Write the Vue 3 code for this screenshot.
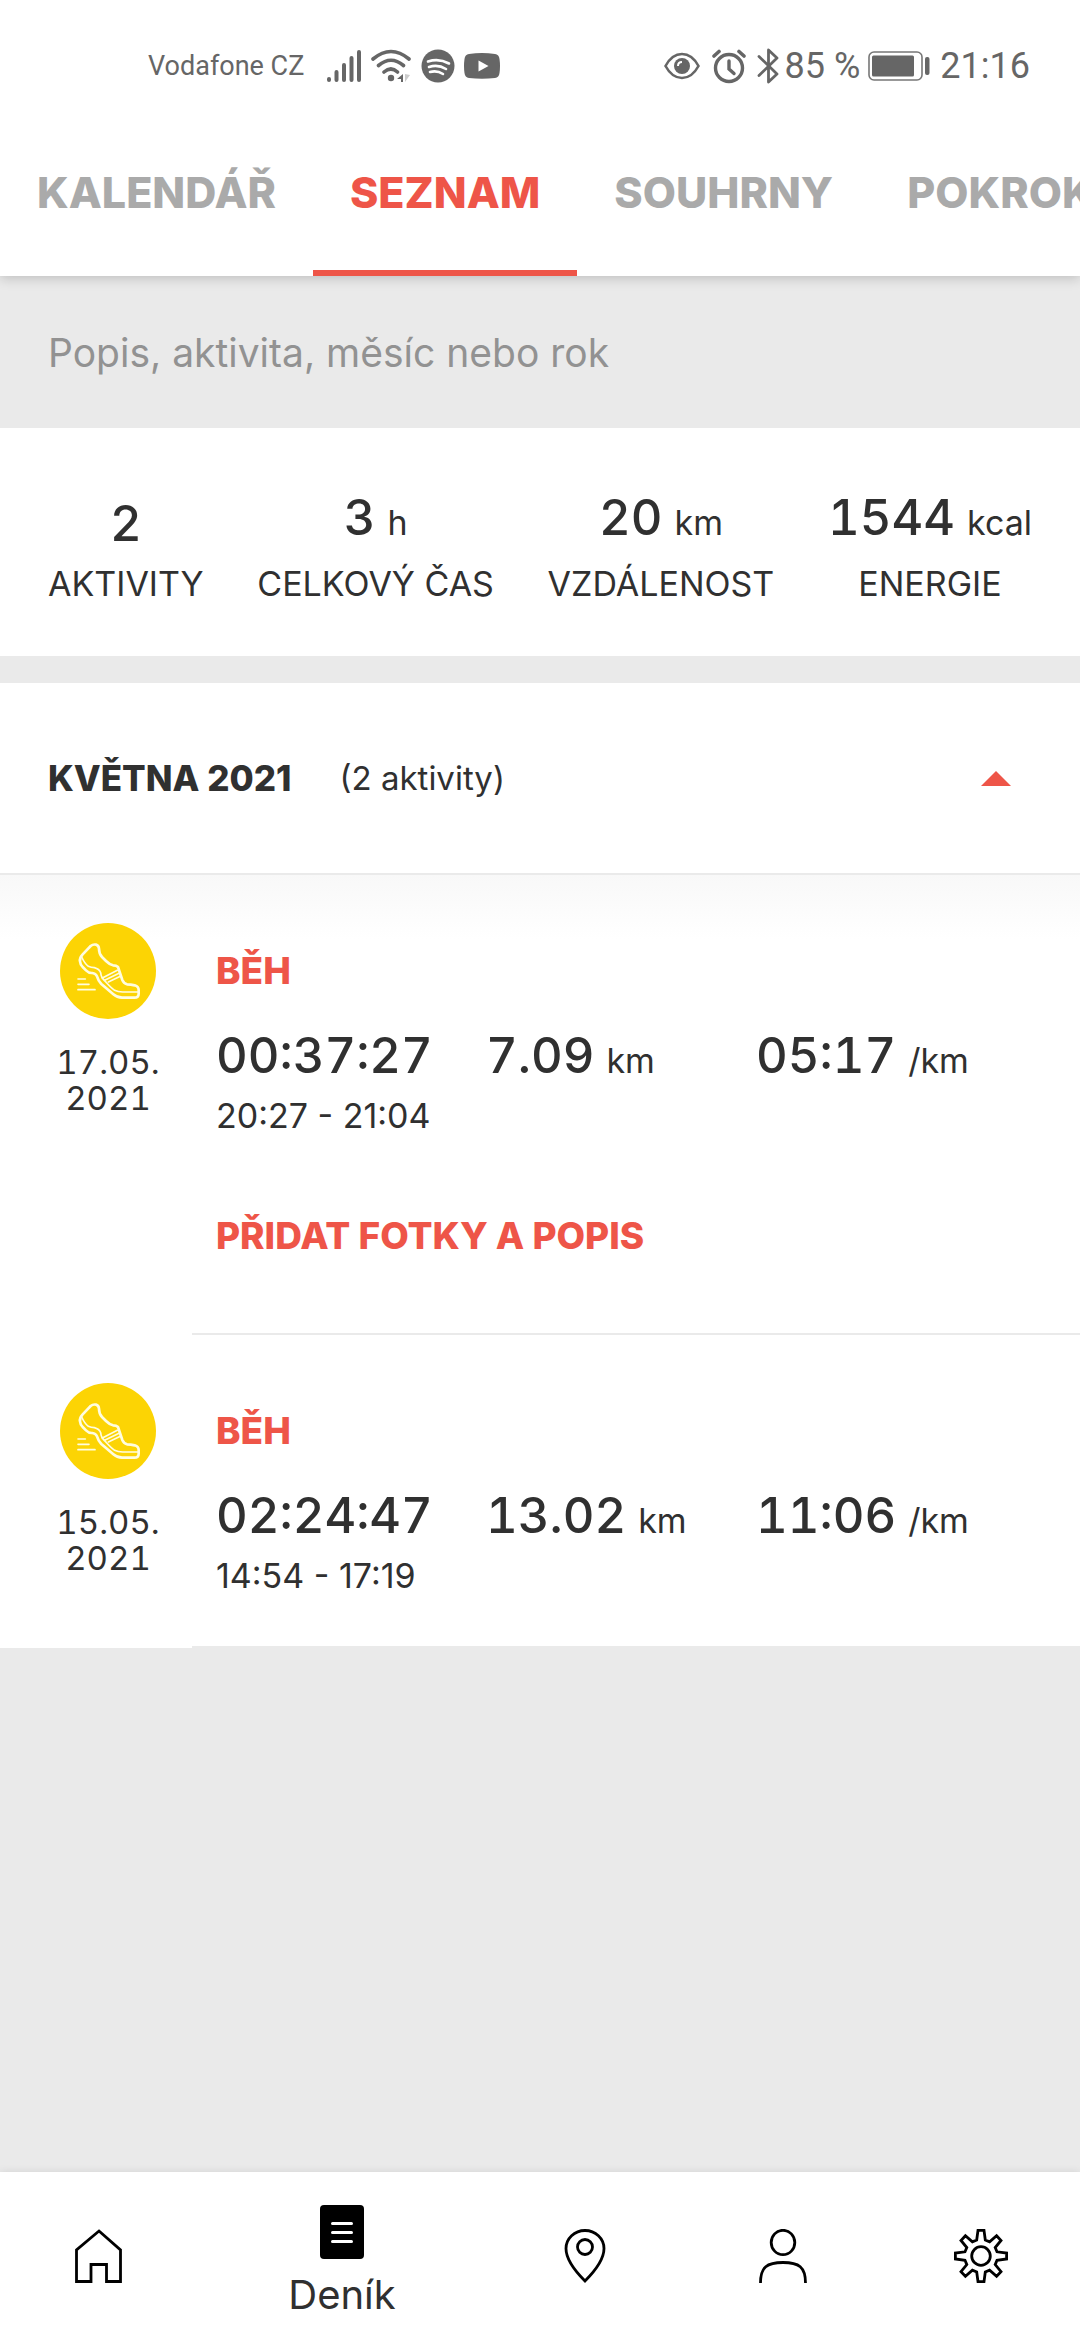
<script setup>
import { ref } from 'vue'

const tabs = ['KALENDÁŘ', 'SEZNAM', 'SOUHRNY', 'POKROK']
const activeTab = ref('SEZNAM')
const query = ref('')
const open = ref(true)

const stats = [
  { value: '2', unit: '', label: 'AKTIVITY' },
  { value: '3', unit: 'h', label: 'CELKOVÝ ČAS' },
  { value: '20', unit: 'km', label: 'VZDÁLENOST' },
  { value: '1544', unit: 'kcal', label: 'ENERGIE' }
]

const entries = [
  { day: '17.05.', year: '2021', time: '00:37:27', range: '20:27 - 21:04', distance: '7.09', pace: '05:17', editable: true },
  { day: '15.05.', year: '2021', time: '02:24:47', range: '14:54 - 17:19', distance: '13.02', pace: '11:06', editable: false }
]
</script>

<template>
  <div class="app">
    <header class="top">
      <div class="status">
        <div class="status-left">
          <span class="carrier">Vodafone CZ</span>
          <svg class="signal" width="36" height="34" viewBox="0 0 36 34" stroke="#666" stroke-width="4" stroke-linecap="round">
            <path d="M3 30v1M10.500 23v8M18 16v15M25.500 9v22M33 3v28" />
          </svg>
          <svg class="wifi" width="40" height="34" viewBox="0 0 40 34" fill="none" stroke="#666" stroke-width="3.600" stroke-linecap="round">
            <path d="M2 10Q20-5 38 10M7.500 16.500Q20 6 32.500 16.500M13 23Q20 17 26.500 23" />
            <circle cx="20" cy="29" r="3.200" fill="#666" stroke="none" />
            <path d="M32 25v8h-2v-3h-4z" fill="#666" stroke="none" />
            <path d="M34 25v8l5-7z" fill="#ccc" stroke="none" />
          </svg>
          <svg class="music" width="34" height="34" viewBox="0 0 34 34">
            <circle cx="17" cy="17" r="16.500" fill="#666" />
            <path d="M7 12.500q11-3.500 21 2M8 18q9-3 17 2M9 23q7-2 13 2" fill="none" stroke="#fff" stroke-width="2.600" stroke-linecap="round" />
          </svg>
          <svg width="36" height="26" viewBox="0 0 36 26">
            <path d="M5 1Q18-1 31 1Q35 1.500 35.500 6Q36.500 13 35.500 20Q35 24.500 31 25Q18 26.500 5 25Q1 24.500 .5 20Q-.5 13 .5 6Q1 1.500 5 1Z" fill="#666" />
            <path d="M14.500 7.500v11l10-5.500z" fill="#fff" />
          </svg>
        </div>
        <div class="status-right">
          <svg class="eye" width="36" height="28" viewBox="0 0 36 28" fill="none" stroke="#666" stroke-width="2.600">
            <path d="M1.500 14Q8 2 18 2T34.500 14Q28 26 18 26T1.500 14Z" />
            <circle cx="18" cy="14" r="8" fill="#666" stroke="none" />
            <path d="M14 14q0-4 4-4" stroke="#fff" stroke-width="2" />
          </svg>
          <svg class="alarm" width="34" height="36" viewBox="0 0 34 36" fill="none" stroke="#666" stroke-linecap="round">
            <circle cx="17" cy="20" r="13.500" stroke-width="3.400" />
            <path d="M17 13v8l5 4.500" stroke-width="3.400" />
            <path d="M2 8l5-4.500M32 8l-5-4.500" stroke-width="3.600" />
          </svg>
          <svg width="22" height="36" viewBox="0 0 22 36" fill="none" stroke="#666" stroke-width="2.800" stroke-linecap="round" stroke-linejoin="round">
            <path d="M2 8.500L20 26 11.500 34V2L20 10 2 27.500" />
          </svg>
          <span class="percent">85 %</span>
          <svg class="battery" width="62" height="30" viewBox="0 0 62 30">
            <rect x="1" y="1" width="53" height="28" rx="5" fill="none" stroke="#777" stroke-width="1.600" />
            <rect x="4" y="4.500" width="42" height="21" rx="1.500" fill="#666" />
            <rect x="57" y="6" width="4.500" height="18" rx="2" fill="#666" />
          </svg>
          <span>21:16</span>
        </div>
      </div>
      <nav class="tabs" aria-label="Deník">
        <button
          v-for="tab in tabs"
          :key="tab"
          type="button"
          class="tab"
          :class="{ 'tab-active': tab === activeTab }"
          @click="activeTab = tab"
        >{{ tab }}</button>
      </nav>
    </header>

    <main class="content">
      <input v-model="query" class="search" type="text" aria-label="Popis, aktivita, měsíc nebo rok" placeholder="Popis, aktivita, měsíc nebo rok" />

      <section class="stats">
        <div v-for="stat in stats" :key="stat.label" class="stat">
          <div class="value" :class="{ 'value-plain': !stat.unit }">
            {{ stat.value }}<span v-if="stat.unit" class="unit">{{ stat.unit }}</span>
          </div>
          <div class="label">{{ stat.label }}</div>
        </div>
      </section>

      <section class="month">
        <button type="button" class="month-head" :aria-expanded="open" @click="open = !open">
          <span class="month-name">KVĚTNA 2021</span>
          <span class="month-count">(2 aktivity)</span>
          <svg class="arrow" width="30" height="15" viewBox="0 0 30 15"><path d="M15 0l15 15H0z" fill="#ee5548" /></svg>
        </button>

        <div v-if="open" class="entries">
          <article v-for="entry in entries" :key="entry.day" class="entry">
            <div class="when">
              <svg class="badge" width="96" height="96" viewBox="0 0 288 288" fill="none" stroke="#fffde0" stroke-linecap="round" stroke-linejoin="round">
                <circle cx="144" cy="144" r="144" fill="#fcd404" stroke="none" />
                <path d="M92 69L68 94Q58 104 60 115Q61 126 68 132L78 142Q87 151 97 150Q107 151 111 160Q115 174 124 183L160 214Q171 224 186 224H223Q236 224 236 212V201Q236 191 224 187Q212 184 201 184Q191 181 187 171L174 132Q169 127 159 127Q148 124 138 114L126 102Q117 92 117 77Q116 67 108 65Q99 63 92 69Z" stroke-width="8" />
                <path d="M65 102Q74 122 85 130Q93 134 103 134Q118 138 122 149Q123 164 135 174Q151 193 164 202Q173 207 188 207H235" stroke-width="5" />
                <path d="M127 165L172 142M134 172L177 151M145 177L181 160" stroke-width="5" />
                <path d="M54 168H76M54 184H87M54 200H105" stroke-width="5" />
              </svg>
              <time class="date">{{ entry.day }}<br />{{ entry.year }}</time>
            </div>
            <div class="body">
              <h2 class="kind">BĚH</h2>
              <div class="metrics">
                <div class="metric">{{ entry.time }}</div>
                <div class="metric">{{ entry.distance }}<span class="unit">km</span></div>
                <div class="metric">{{ entry.pace }}<span class="unit">/km</span></div>
              </div>
              <div class="range">{{ entry.range }}</div>
              <button v-if="entry.editable" type="button" class="action">PŘIDAT FOTKY A POPIS</button>
            </div>
          </article>
        </div>
      </section>
    </main>

    <nav class="bottom" aria-label="Hlavní nabídka">
      <a href="#" class="item" aria-label="Domů">
        <svg width="54" height="54" viewBox="0 0 54 54" fill="none" stroke="#000" stroke-width="2.800">
          <path d="M27 2L48.500 21V52.500H34.500V35.500H19V52.500H4.500V21Z" />
        </svg>
      </a>
      <a href="#" class="item item-active" aria-current="page">
        <svg width="54" height="54" viewBox="0 0 54 54">
          <rect x="5" y="0" width="44" height="54" rx="4" fill="#000" />
          <path d="M17.500 18.500h19M17.500 27.500h19M17.500 36.500h19" stroke="#fff" stroke-width="3" stroke-linecap="round" />
        </svg>
        <span class="item-label">Deník</span>
      </a>
      <a href="#" class="item" aria-label="Místa">
        <svg width="54" height="54" viewBox="0 0 54 54" fill="none" stroke="#000" stroke-width="2.800">
          <path d="M27 52Q8 33 8 19.500A19 18 0 0 1 46 19.500Q46 33 27 52Z" />
          <circle cx="27" cy="18" r="7.500" />
        </svg>
      </a>
      <a href="#" class="item" aria-label="Profil">
        <svg width="54" height="54" viewBox="0 0 54 54" fill="none" stroke="#000" stroke-width="2.800">
          <ellipse cx="27" cy="13.500" rx="11.800" ry="12.200" />
          <path d="M4.500 54C4.500 38 11 33.500 27 33.500S49.500 38 49.500 54" />
        </svg>
      </a>
      <a href="#" class="item" aria-label="Nastavení">
        <svg width="54" height="54" viewBox="0 0 54 54" fill="none" stroke="#000" stroke-width="2.800">
          <path d="M24 1.400H30L31.300 11L35.600 12.800L42.600 6.800L47 11.500L41.200 18.500L43 22.800L52.600 24V30L43 31.300L41.200 35.600L47 42.600L42.600 47.200L35.600 41.200L31.300 43L30 52.600H24L22.700 43L18.400 41.200L11.400 47.200L7 42.600L12.800 35.600L11 31.300L1.400 30V24L11 22.800L12.800 18.500L7 11.500L11.400 6.800L18.400 12.800L22.700 11Z" />
          <circle cx="27" cy="27" r="9.300" />
        </svg>
      </a>
    </nav>
  </div>
</template>

<style>
body {
  margin: 0;
}
</style>

<style scoped>
.app {
  display: flex;
  flex-direction: column;
  min-height: 100vh;
  overflow: hidden;
  background: #eaeaea;
  color: #303030;
  font-family: Inter, "Liberation Sans", sans-serif;
  font-size: 34px;
  line-height: 36px;
}

svg {
  display: block;
  flex: none;
}

button {
  border: 0;
  background: none;
  font-family: inherit;
  white-space: nowrap;
  cursor: pointer;
}

.top {
  position: relative;
  background: #fff;
  box-shadow: 0 2px 12px rgba(0, 0, 0, 0.2);
}

.status {
  display: flex;
  justify-content: space-between;
  align-items: center;
  height: 132px;
  padding: 0 50px 0 148px;
  color: #666;
  font-family: Roboto, sans-serif;
  font-size: 36px;
}

.status-left,
.status-right {
  display: flex;
  align-items: center;
}

.carrier {
  margin-right: 22px;
  font-size: 27px;
}

.wifi {
  margin: 0 10px 0 9px;
}

.music {
  margin-right: 9px;
}

.eye {
  margin-right: 12px;
}

.alarm {
  margin-right: 11px;
}

.percent {
  margin-left: 6px;
}

.battery {
  margin: 0 10px 0 8px;
}

.tabs {
  display: flex;
  overflow: hidden;
}

.tab {
  flex: none;
  height: 144px;
  padding: 36px 37px 54px;
  border-bottom: 6px solid transparent;
  color: #aaa;
  font-size: 43px;
  font-weight: 800;
  line-height: 48px;
}

.tab-active {
  border-bottom-color: #ee5548;
  color: #ee5548;
}

.content {
  flex: 1;
}

.search {
  display: block;
  box-sizing: border-box;
  width: 100%;
  height: 152px;
  padding: 0 48px;
  border: 0;
  outline: 0;
  background: none;
  color: #303030;
  font-family: inherit;
  font-size: 39px;
}

.search::placeholder {
  color: #929292;
  opacity: 1;
}

.stats {
  display: flex;
  justify-content: space-between;
  align-items: flex-end;
  padding: 60px 48px 54px;
  background: #fff;
  text-align: center;
}

.value,
.metric {
  font-size: 49px;
  font-weight: 500;
  line-height: 60px;
}

.value {
  margin-bottom: 18px;
}

.value-plain {
  margin-bottom: 12px;
}

.value,
.metric,
.date {
  font-variant-numeric: tabular-nums;
}

.date {
  margin-top: 25px;
  font-size: 33px;
}

.unit {
  margin-left: 12px;
  font-size: 34px;
  font-weight: 400;
  line-height: 36px;
}

.month {
  margin-top: 27px;
  background: #fff;
}

.month-head {
  display: flex;
  align-items: center;
  width: 100%;
  height: 192px;
  padding: 0 69px 0 48px;
  border-bottom: 2px solid #eaeaea;
  color: #303030;
  font-size: 33px;
}

.month-name {
  margin-right: 48px;
  font-size: 35px;
  font-weight: 800;
}

.arrow {
  margin-left: auto;
}

.entries {
  background: linear-gradient(#f8f8f8, #fff 64px);
}

.entry {
  display: flex;
}

.when {
  display: flex;
  flex-direction: column;
  align-items: center;
  box-sizing: border-box;
  width: 192px;
  padding: 48px 0 0 24px;
  text-align: center;
}

.body {
  flex: 1;
  padding: 72px 54px 52px 24px;
  border-bottom: 2px solid #eaeaea;
}

.kind,
.action {
  margin: 0;
  padding: 0;
  color: #ee5548;
  font-size: 37px;
  font-weight: 800;
  line-height: 48px;
}

.metrics {
  display: grid;
  grid-template-columns: repeat(3, 1fr);
  margin: 31px 0 12px;
}

.action {
  display: block;
  margin: 78px 0 21px;
}

.bottom {
  display: flex;
  height: 168px;
  background: #fff;
  box-shadow: 0 0 8px rgba(0, 0, 0, 0.1);
}

.item {
  display: flex;
  flex: 198;
  flex-direction: column;
  align-items: center;
  justify-content: center;
  color: #303030;
  text-decoration: none;
}

.item-active {
  flex: 288;
  justify-content: flex-start;
  padding-top: 33px;
}

.item-label {
  margin-top: 12px;
  font-size: 40px;
  line-height: 48px;
}
</style>
